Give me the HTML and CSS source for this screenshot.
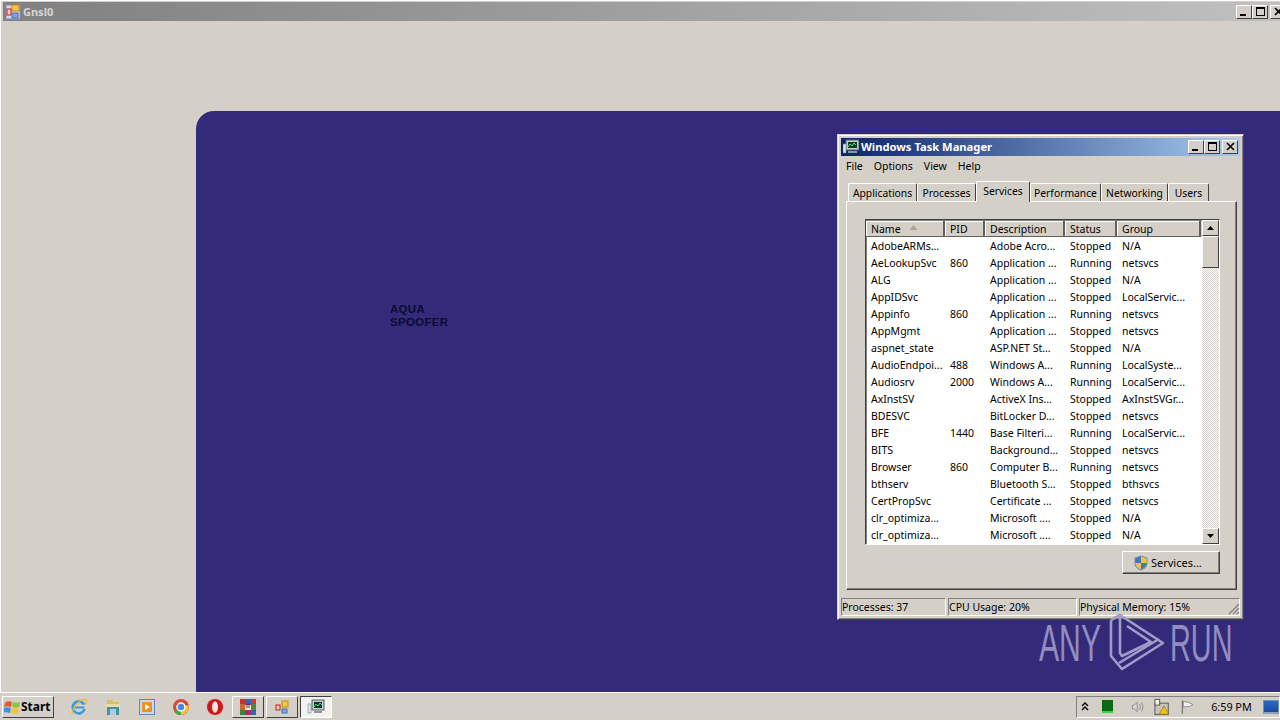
FILE: index.html
```html
<!DOCTYPE html>
<html lang="en">
<head>
    <meta charset="UTF-8">
    <title>Gnsl0</title>
    <link rel="stylesheet" href="styles.css">
</head>
<body>
    <div class="app-window">
        <div class="app-title">
            <svg class="app-icon" width="16" height="16" viewBox="0 0 16 16">
                <rect x="1" y="1" width="14" height="14" fill="#d8d4e8" stroke="#8a8ab0"/>
                <rect x="7" y="1" width="7" height="6" fill="#f6c83c" stroke="#c08a10"/>
                <rect x="2" y="5" width="4" height="6" fill="#f4d0c0" stroke="#c02020"/>
                <rect x="7" y="9" width="6" height="5" fill="#7aa6dc" stroke="#4a70b0"/>
            </svg>
            <span class="app-name">Gnsl0</span>
            <div class="app-buttons">
                <span class="cap-btn"><i class="glyph-min"></i></span>
                <span class="cap-btn"><i class="glyph-max"></i></span>
                <span class="cap-btn cap-close">
                    <svg width="9" height="9" viewBox="0 0 9 9"><path d="M1 1l7 7M8 1l-7 7" stroke="#000" stroke-width="1.6"/></svg>
                </span>
            </div>
        </div>
        <div class="app-body">
            <div class="panel">
                <div class="spoofer-label">AQUA<br>SPOOFER</div>
            </div>
        </div>
    </div>

    <div class="taskmgr">
        <div class="tm-title">
            <svg class="tm-icon" width="16" height="16" viewBox="0 0 16 16">
                <rect x="3" y="1" width="13" height="10" fill="#c8ccd0" stroke="#506070"/>
                <rect x="5" y="3" width="9" height="6" fill="#0c3c20"/>
                <path d="M5 8l2-3 2 2 2-3 2 2" stroke="#50e070" fill="none"/>
                <rect x="0" y="5" width="3" height="9" fill="#e8e8e8" stroke="#708090" stroke-width=".6"/>
                <rect x="5" y="12" width="9" height="2" fill="#8a98a4"/>
            </svg>
            <span class="tm-name">Windows Task Manager</span>
            <div class="tm-buttons">
                <span class="cap-btn"><i class="glyph-min"></i></span>
                <span class="cap-btn"><i class="glyph-max"></i></span>
                <span class="cap-btn cap-close">
                    <svg width="9" height="9" viewBox="0 0 9 9"><path d="M1 1l7 7M8 1l-7 7" stroke="#000" stroke-width="1.6"/></svg>
                </span>
            </div>
        </div>
        <div class="tm-menu">
            <span>File</span><span>Options</span><span>View</span><span>Help</span>
        </div>
        <div class="tabs">
            <span class="tab tab-apps">Applications</span>
            <span class="tab tab-proc">Processes</span>
            <span class="tab tab-serv active">Services</span>
            <span class="tab tab-perf">Performance</span>
            <span class="tab tab-net">Networking</span>
            <span class="tab tab-users">Users</span>
        </div>
        <div class="tab-panel">
            <div class="list">
                <div class="list-main">
                    <div class="list-head">
                        <span class="hcell c-name">Name <svg class="sort" width="9" height="5" viewBox="0 0 9 5"><path d="M4.5 0l4 5h-8z" fill="#aca899"/></svg></span>
                        <span class="hcell c-pid">PID</span>
                        <span class="hcell c-desc">Description</span>
                        <span class="hcell c-stat">Status</span>
                        <span class="hcell c-group">Group</span>
                    </div>
                    <div class="rows">
                        <div class="row"><span>AdobeARMs...</span><span></span><span>Adobe Acro...</span><span>Stopped</span><span>N/A</span></div>
                        <div class="row"><span>AeLookupSvc</span><span>860</span><span>Application ...</span><span>Running</span><span>netsvcs</span></div>
                        <div class="row"><span>ALG</span><span></span><span>Application ...</span><span>Stopped</span><span>N/A</span></div>
                        <div class="row"><span>AppIDSvc</span><span></span><span>Application ...</span><span>Stopped</span><span>LocalServic...</span></div>
                        <div class="row"><span>Appinfo</span><span>860</span><span>Application ...</span><span>Running</span><span>netsvcs</span></div>
                        <div class="row"><span>AppMgmt</span><span></span><span>Application ...</span><span>Stopped</span><span>netsvcs</span></div>
                        <div class="row"><span>aspnet_state</span><span></span><span>ASP.NET St...</span><span>Stopped</span><span>N/A</span></div>
                        <div class="row"><span>AudioEndpoi...</span><span>488</span><span>Windows A...</span><span>Running</span><span>LocalSyste...</span></div>
                        <div class="row"><span>Audiosrv</span><span>2000</span><span>Windows A...</span><span>Running</span><span>LocalServic...</span></div>
                        <div class="row"><span>AxInstSV</span><span></span><span>ActiveX Ins...</span><span>Stopped</span><span>AxInstSVGr...</span></div>
                        <div class="row"><span>BDESVC</span><span></span><span>BitLocker D...</span><span>Stopped</span><span>netsvcs</span></div>
                        <div class="row"><span>BFE</span><span>1440</span><span>Base Filteri...</span><span>Running</span><span>LocalServic...</span></div>
                        <div class="row"><span>BITS</span><span></span><span>Background...</span><span>Stopped</span><span>netsvcs</span></div>
                        <div class="row"><span>Browser</span><span>860</span><span>Computer B...</span><span>Running</span><span>netsvcs</span></div>
                        <div class="row"><span>bthserv</span><span></span><span>Bluetooth S...</span><span>Stopped</span><span>bthsvcs</span></div>
                        <div class="row"><span>CertPropSvc</span><span></span><span>Certificate ...</span><span>Stopped</span><span>netsvcs</span></div>
                        <div class="row"><span>clr_optimiza...</span><span></span><span>Microsoft ....</span><span>Stopped</span><span>N/A</span></div>
                        <div class="row"><span>clr_optimiza...</span><span></span><span>Microsoft ....</span><span>Stopped</span><span>N/A</span></div>
                    </div>
                </div>
                <div class="scrollbar">
                    <span class="sb-btn"><svg width="7" height="4" viewBox="0 0 7 4"><path d="M3.5 0l3.5 4h-7z"/></svg></span>
                    <span class="sb-thumb"></span>
                    <span class="sb-track"></span>
                    <span class="sb-btn"><svg width="7" height="4" viewBox="0 0 7 4"><path d="M0 0h7l-3.5 4z"/></svg></span>
                </div>
            </div>
            <div class="panel-foot">
                <button class="services-btn">
                    <svg width="16" height="16" viewBox="0 0 16 16">
                        <path d="M8 1l6 2v5c0 4-3 6-6 7-3-1-6-3-6-7V3z" fill="#8aa4c8" stroke="#5a7090" stroke-width=".7"/>
                        <path d="M8 1.500V8H2.400V3.400z" fill="#3f78c8"/>
                        <path d="M8 8h5.600c-.2 3.200-2.900 5.200-5.600 6.300z" fill="#3f78c8"/>
                        <path d="M8 1.500l5.600 1.900V8H8z" fill="#f0c830"/>
                        <path d="M8 8v6.300C5.300 13.200 2.600 11.200 2.400 8z" fill="#f0c830"/>
                    </svg>
                    Services...
                </button>
            </div>
        </div>
        <div class="tm-status">
            <span class="st st-proc">Processes: 37</span>
            <span class="st st-cpu">CPU Usage: 20%</span>
            <span class="st st-mem">Physical Memory: 15%</span>
            <svg class="grip" width="12" height="12" viewBox="0 0 12 12">
                <path d="M11 1L1 11M11 5l-6 6M11 9l-2 2" stroke="#808080" stroke-width="1.2"/>
            </svg>
        </div>
    </div>

    <div class="watermark">
        <span class="wm-text wm-any">ANY</span>
        <svg class="wm-logo" width="70" height="62" viewBox="0 0 70 62" fill="none" stroke="#a09cc8" stroke-width="2.600" stroke-linejoin="round">
            <path d="M11 8V44L22 57L63 31L20 3L11 8"/>
            <path d="M20 3V41L22 44L51 30L27 14"/>
            <path d="M19 51L59 27"/>
        </svg>
        <span class="wm-text wm-run">RUN</span>
    </div>

    <div class="taskbar">
        <button class="start-btn">
            <svg width="17" height="16" viewBox="0 0 17 16">
                <path d="M1 4c2-2 4-2 7-1L7 8C4 7 2 7 0 8z" fill="#e8562a"/>
                <path d="M9 3c3 1 5 1 7 0l-1 5c-2 1-4 1-7 0z" fill="#8cc63e"/>
                <path d="M0 9c2-1 4-1 7 0l-1 5c-3-1-5-1-7 0z" fill="#3d8fe0"/>
                <path d="M8 9c3 1 5 1 7 0l-1 5c-2 1-4 1-7 0z" fill="#f6c42c"/>
            </svg>
            <span>Start</span>
        </button>
        <div class="quick">
            <svg width="18" height="18" viewBox="0 0 18 18">
                <path d="M14.500 11A6 6 0 1 1 14 6.500C13 4.500 11 3.500 9 3.500" fill="none" stroke="#3a9ae0" stroke-width="2.600"/>
                <rect x="4.500" y="8.500" width="10" height="2" fill="#3a9ae0"/>
                <path d="M2 16C3 8 11 0 16 1.500c1.500 1.500 0 4-1 5.500" fill="none" stroke="#e8b830" stroke-width="1.300"/>
            </svg>
            <svg width="18" height="18" viewBox="0 0 18 18">
                <path d="M3 2h5l1 2h6v4H3z" fill="#d8c060"/>
                <rect x="2" y="6" width="14" height="4" fill="#e4dca0"/>
                <rect x="3" y="9" width="12" height="8" fill="#4a90a8"/>
                <rect x="6" y="11" width="6" height="6" fill="#a8d0dc"/>
            </svg>
            <svg width="18" height="18" viewBox="0 0 18 18">
                <rect x="1.500" y="1.500" width="15" height="15" fill="#c8d8ec" stroke="#5a88c0"/>
                <rect x="4" y="4" width="10" height="10" rx="1" fill="#f09020"/>
                <path d="M7 6l5 3-5 3z" fill="#fff"/>
            </svg>
            <svg width="18" height="18" viewBox="0 0 18 18">
                <circle cx="9" cy="9" r="8" fill="#d84a38"/>
                <path d="M9 9L2 13.500A8 8 0 0 0 9 17z" fill="#4ca64c"/>
                <path d="M9 9l7.500-2A8 8 0 0 1 9 17z" fill="#f4c430"/>
                <circle cx="9" cy="9" r="4" fill="#4a88e0" stroke="#fff" stroke-width="1.500"/>
            </svg>
            <svg width="18" height="18" viewBox="0 0 18 18">
                <circle cx="9" cy="9" r="8" fill="#d01818"/>
                <ellipse cx="9" cy="9" rx="3" ry="5.800" fill="#f4e8e8"/>
            </svg>
        </div>
        <div class="task-btns">
            <span class="task-btn">
                <svg width="18" height="16" viewBox="0 0 18 16">
                    <rect x="1" y="0" width="16" height="16" fill="#7a2c70"/>
                    <rect x="1" y="0" width="5" height="5" fill="#c83030"/><rect x="6" y="0" width="6" height="5" fill="#2c6ab4"/>
                    <rect x="12" y="0" width="5" height="5" fill="#d03838"/><rect x="1" y="11" width="5" height="5" fill="#38843c"/>
                    <rect x="6" y="11" width="6" height="5" fill="#b02868"/><rect x="12" y="11" width="5" height="5" fill="#2c6ab4"/>
                    <rect x="1" y="5" width="5" height="6" fill="#c86830"/><rect x="12" y="5" width="5" height="6" fill="#4c8a44"/>
                    <path d="M6 6h6v5H6z" fill="#f4eccc"/>
                    <path d="M8 4v5M10 4v5" stroke="#802070"/>
                </svg>
            </span>
            <span class="task-btn">
                <svg width="16" height="16" viewBox="0 0 16 16">
                    <rect x="8" y="2" width="6" height="6" fill="#f6c83c" stroke="#c08a10"/>
                    <rect x="2" y="6" width="4" height="5" fill="#f4d0c0" stroke="#c02020"/>
                    <rect x="8" y="10" width="5" height="4" fill="#7aa6dc" stroke="#4a70b0"/>
                </svg>
            </span>
            <span class="task-btn pressed">
                <svg width="18" height="16" viewBox="0 0 18 16">
                    <rect x="5" y="1" width="12" height="10" fill="#c8ccd0" stroke="#506070"/>
                    <rect x="7" y="3" width="8" height="6" fill="#0c3c20"/>
                    <path d="M7 8l2-3 2 2 2-3 2 2" stroke="#50e070" fill="none"/>
                    <rect x="1" y="5" width="3" height="9" fill="#e8e8e8" stroke="#708090" stroke-width=".6"/>
                    <rect x="7" y="12" width="8" height="2" fill="#8a98a4"/>
                </svg>
            </span>
        </div>
        <div class="tray">
            <svg class="tray-up" width="8" height="10" viewBox="0 0 8 10"><path d="M1 4l3-3 3 3M1 8l3-3 3 3" fill="none" stroke="#000" stroke-width="1.400"/></svg>
            <span class="tray-cpu"></span>
            <svg class="tray-vol" width="16" height="16" viewBox="0 0 16 16" fill="none" stroke="#8a8a8a">
                <path d="M1.500 6h2l3-3v10l-3-3h-2z" fill="#d8d8d8"/>
                <path d="M9 5c1 2 1 4 0 6M11 3.500c2 3 2 6 0 9"/>
            </svg>
            <svg class="tray-net" width="18" height="18" viewBox="0 0 18 18">
                <rect x="2" y="5" width="14" height="12" fill="#c8c4b8" stroke="#555"/>
                <rect x="2" y="1" width="5" height="6" fill="#eee" stroke="#555"/>
                <path d="M11.500 8l5 8.500h-10z" fill="#f0c020" stroke="#906000" stroke-width=".6"/>
            </svg>
            <svg class="tray-flag" width="16" height="16" viewBox="0 0 16 16">
                <path d="M2.500 1v14" stroke="#7a7a7a" stroke-width="1.400"/>
                <path d="M3.500 2c3 1.500 5 0 6 1.500l4 2-4 2.500c-2-1-4 0-6 0z" fill="#f0f0f0" stroke="#8a8a8a"/>
            </svg>
            <span class="clock">6:59 PM</span>
            <span class="show-desktop"></span>
        </div>
    </div>
</body>
</html>
```

FILE: styles.css
```css
* {
    box-sizing: border-box;
}
html, body {
    margin: 0;
    height: 100%;
}
body {
    width: 1280px;
    height: 720px;
    overflow: hidden;
    position: relative;
    display: flex;
    flex-direction: column;
    background: #d4d0c8;
    font-family: "Noto Sans", "DejaVu Sans", sans-serif;
    font-size: 10.500px;
    color: #000;
}

/* outer window */
.app-window {
    flex: 1;
    display: flex;
    flex-direction: column;
    min-height: 0;
    padding: 1px 0 0 1px;
    border-top: 1px solid #fff;
    border-left: 1px solid #fff;
}
.app-title {
    height: 19px;
    margin-left: 1px;
    flex: none;
    display: flex;
    align-items: center;
    padding-left: 2px;
    background: linear-gradient(to right, #808080, #c0c0c0);
}
.app-icon {
    flex: none;
}
.app-name {
    margin-left: 2px;
    color: #d8d8d8;
    font-weight: 700;
    font-size: 11px;
}
.app-buttons {
    margin-left: auto;
    margin-right: -8px;
    display: flex;
    padding-right: 2px;
}
.cap-btn {
    width: 16px;
    height: 14px;
    background: #d4d0c8;
    border: 1px solid;
    border-color: #fff #404040 #404040 #fff;
    position: relative;
    display: flex;
    align-items: center;
    justify-content: center;
}
.cap-close {
    margin-left: 2px;
}
.glyph-min {
    width: 6px;
    height: 2px;
    background: #000;
    position: absolute;
    left: 3px;
    bottom: 2px;
}
.glyph-max {
    width: 9px;
    height: 9px;
    border: 1px solid #000;
    border-top-width: 2px;
}
.app-body {
    flex: 1;
    padding: 90px 0 0 194px;
    min-height: 0;
}
.panel {
    height: 100%;
    background: #332a7a;
    border-top-left-radius: 18px;
    padding: 192px 0 0 194px;
}
.spoofer-label {
    font-family: "Liberation Sans", sans-serif;
    font-weight: 700;
    font-size: 11.500px;
    line-height: 13px;
    letter-spacing: .3px;
    color: #0c0c30;
}

/* taskbar */
.taskbar {
    height: 28px;
    flex: none;
    display: flex;
    align-items: center;
    background: #d4d0c8;
    border-top: 1px solid #fff;
    padding-left: 2px;
}
.start-btn {
    width: 52px;
    height: 22px;
    padding: 0 0 0 1px;
    display: flex;
    align-items: center;
    background: #d4d0c8;
    border: 1px solid;
    border-color: #fff #404040 #404040 #fff;
    font-family: "Noto Sans", sans-serif;
    font-weight: 700;
    font-size: 12px;
}
.quick {
    display: flex;
    gap: 16px;
    margin-left: 16px;
}
.task-btns {
    display: flex;
    gap: 2px;
    margin-left: 8px;
}
.task-btn {
    width: 32px;
    height: 22px;
    display: flex;
    align-items: center;
    justify-content: center;
    border: 1px solid;
    border-color: #fff #404040 #404040 #fff;
}
.task-btn.pressed {
    border-color: #404040 #fff #fff #404040;
    background: #f4f2ee;
}
.tray {
    margin-left: auto;
    width: 204px;
    height: 22px;
    display: flex;
    align-items: center;
    border: 1px solid;
    border-color: #808080 #fff #fff #808080;
    padding-left: 3px;
}
.tray-up {
    margin-left: 1px;
    flex: none;
}
.tray-cpu {
    width: 12px;
    height: 13px;
    margin-left: 13px;
    background: #0a6a14;
    border-bottom: 2px solid #3cd048;
}
.tray-vol {
    margin-left: 18px;
}
.tray-net {
    margin-left: 6px;
}
.tray-flag {
    margin-left: 10px;
}
.clock {
    margin-left: 16px;
    font-size: 10.800px;
    white-space: nowrap;
}
.show-desktop {
    width: 17px;
    height: 14px;
    margin-left: 11px;
    background: linear-gradient(#2a6ac8, #1a4a98);
    border: 1px solid #7090b8;
    border-bottom: 2px solid #90a0b0;
}

/* task manager window */
.taskmgr {
    position: absolute;
    left: 837px;
    top: 134px;
    width: 407px;
    height: 486px;
    padding: 3px;
    display: flex;
    flex-direction: column;
    background: #d4d0c8;
    border: 1px solid;
    border-color: #d4d0c8 #404040 #404040 #d4d0c8;
    box-shadow: inset 1px 1px 0 #fff, inset -1px -1px 0 #808080;
}
.tm-title {
    height: 18px;
    flex: none;
    display: flex;
    align-items: center;
    padding-left: 2px;
    padding-bottom: 1px;
    background: linear-gradient(to right, #0a246a, #a6caf0);
}
.tm-icon {
    flex: none;
}
.tm-name {
    margin-left: 2px;
    color: #fff;
    font-weight: 700;
    font-size: 11.200px;
}
.tm-buttons {
    margin-left: auto;
    display: flex;
    padding-right: 2px;
}
.tm-menu {
    height: 19px;
    flex: none;
    display: flex;
    align-items: center;
    padding-left: 5px;
    gap: 11px;
}
.tabs {
    height: 26px;
    flex: none;
    display: flex;
    align-items: flex-end;
    padding-left: 7px;
    position: relative;
    z-index: 1;
}
.tab {
    height: 18px;
    display: flex;
    align-items: center;
    justify-content: center;
    background: #d4d0c8;
    border: 1px solid;
    border-color: #fff #404040 #d4d0c8 #fff;
    border-bottom: 0;
    border-radius: 2px 2px 0 0;
    white-space: nowrap;
    font-size: 10.300px;
}
.tab-apps { width: 69px; }
.tab-proc { width: 59px; }
.tab-serv { width: 54px; }
.tab-perf { width: 71px; }
.tab-net { width: 67px; }
.tab-users { width: 41px; }
.tab.active {
    height: 21px;
    margin-bottom: -1px;
    padding-bottom: 3px;
}
.tab-panel {
    width: 391px;
    height: 389px;
    margin-left: 5px;
    flex: none;
    padding: 17px 16px 0 18px;
    border: 1px solid;
    border-color: #fff #404040 #404040 #fff;
    box-shadow: inset -1px -1px 0 #808080;
}
.list {
    height: 326px;
    display: flex;
    border: 1px solid;
    border-color: #404040 #fff #fff #404040;
    box-shadow: inset 1px 1px 0 #808080;
    background: #fff;
}
.list-main {
    flex: 1;
    min-width: 0;
    overflow: hidden;
}
.list-head {
    height: 16px;
    display: flex;
    background: #d4d0c8;
    margin-top: 1px;
}
.hcell {
    height: 16px;
    display: flex;
    align-items: center;
    padding-left: 5px;
    border-right: 2px solid #606060;
    border-bottom: 1px solid #606060;
    box-shadow: inset 1px 1px 0 #fff;
}
.sort {
    margin-left: 8px;
    margin-top: -2px;
}
.c-name { width: 79px; }
.c-pid { width: 40px; }
.c-desc { width: 80px; }
.c-stat { width: 52px; }
.c-group { width: 84px; }
.rows {
    height: 308px;
    overflow: hidden;
}
.row {
    height: 17px;
    display: grid;
    grid-template-columns: 79px 40px 80px 52px 1fr;
    align-items: center;
    padding-left: 5px;
    white-space: nowrap;
}
.scrollbar {
    width: 17px;
    flex: none;
    display: flex;
    flex-direction: column;
}
.sb-btn {
    height: 16px;
    flex: none;
    display: flex;
    align-items: center;
    justify-content: center;
    background: #d4d0c8;
    border: 1px solid;
    border-color: #fff #404040 #404040 #fff;
}
.sb-thumb {
    height: 32px;
    flex: none;
    background: #d4d0c8;
    border: 1px solid;
    border-color: #fff #404040 #404040 #fff;
}
.sb-track {
    flex: 1;
    background: repeating-conic-gradient(#fff 0 25%, #d4d0c8 0 50%) 0 0 / 2px 2px;
}
.panel-foot {
    display: flex;
    justify-content: flex-end;
    padding-top: 6px;
}
.services-btn {
    width: 98px;
    height: 23px;
    padding: 0 0 0 10px;
    display: flex;
    align-items: center;
    gap: 2px;
    background: #d4d0c8;
    border: 1px solid;
    border-color: #fff #404040 #404040 #fff;
    box-shadow: inset -1px -1px 0 #808080;
    font-family: "Noto Sans", sans-serif;
    font-size: 11px;
}
.tm-status {
    height: 18px;
    margin-top: 8px;
    flex: none;
    display: flex;
    position: relative;
}
.st {
    height: 18px;
    display: flex;
    align-items: center;
    padding-left: 0;
    border: 1px solid;
    border-color: #808080 #fff #fff #808080;
    margin-right: 2px;
    white-space: nowrap;
}
.st-proc { width: 105px; }
.st-cpu { width: 129px; }
.st-mem { flex: 1; margin-right: 0; }
.grip {
    position: absolute;
    right: 0;
    bottom: 1px;
}

/* watermark over the page */
.watermark {
    position: absolute;
    left: 1038px;
    top: 612px;
    width: 195px;
    height: 62px;
    color: #918dc0;
}
.wm-text {
    position: absolute;
    top: 3px;
    font-family: "Liberation Sans", sans-serif;
    font-size: 52px;
    line-height: 56px;
    transform-origin: left top;
}
.wm-any {
    left: 1px;
    transform: scaleX(.58);
}
.wm-run {
    left: 132px;
    transform: scaleX(.555);
}
.wm-logo {
    position: absolute;
    left: 62px;
    top: 0;
}
```
